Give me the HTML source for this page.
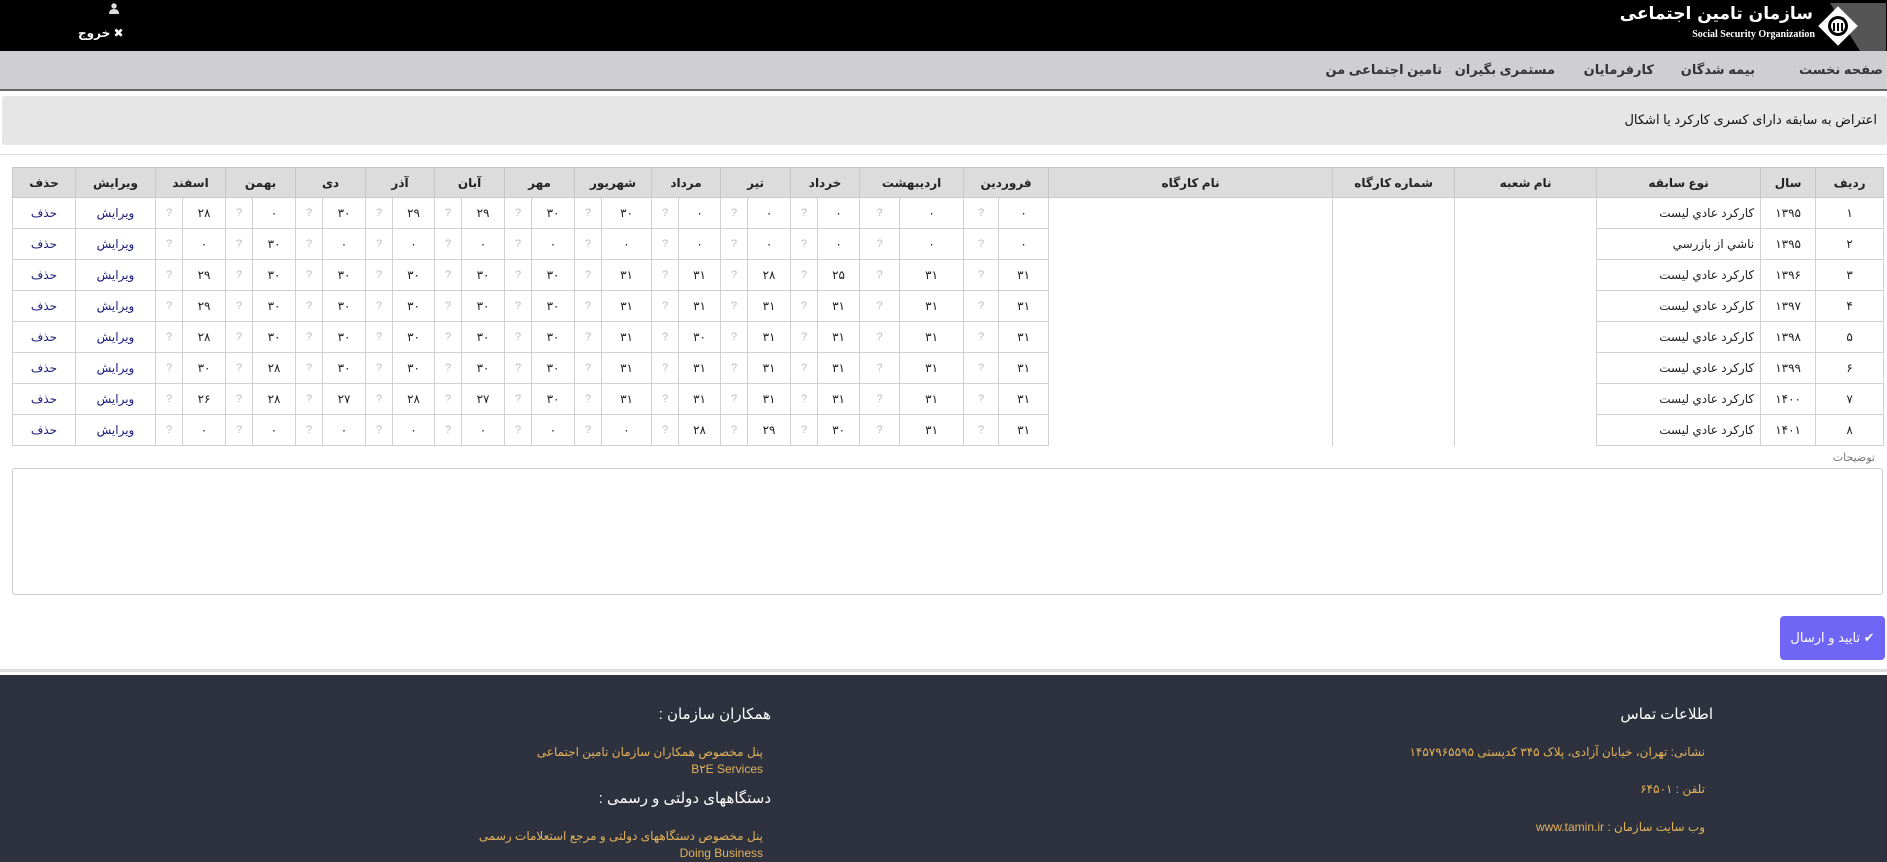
<!DOCTYPE html>
<html dir="rtl"><head><meta charset="utf-8"><style>
*{box-sizing:border-box;margin:0;padding:0}
body{width:1887px;height:862px;overflow:hidden;background:#fff;font-family:"Liberation Sans","DejaVu Sans",sans-serif;position:relative;color:#222}
.hdr{position:absolute;left:0;top:0;width:1887px;height:51px;background:#000}
.nav{position:absolute;left:0;top:51px;width:1887px;height:40px;background:#cfcfd1;border-bottom:2px solid #666}
.nav span{position:absolute;top:11px;font-size:13px;font-weight:bold;color:#333;white-space:nowrap}
.title{position:absolute;left:2px;top:96px;width:1885px;height:49px;background:#e6e6e6;border-radius:3px}
.title span{position:absolute;right:10px;top:16px;font-size:13px;color:#111}
.panel{position:absolute;left:0;top:154px;width:1887px;height:518px;border-top:1px solid #ddd;border-bottom:3px solid #ddd}
table{position:absolute;left:12px;top:167px;width:1871px;border-collapse:collapse;table-layout:fixed;font-size:12px}
th{background:#dcdcdc;height:30px;border:1px solid #c8c8c8;font-weight:bold;font-size:12px;text-align:center}
td{height:31px;border:1px solid #d0d0d0;text-align:center;color:#222}
td.q{color:#bbb;font-size:11px}
td.r{text-align:right;padding-right:6px}
td.b{border-top-color:transparent;border-bottom-color:transparent}
td.l{color:#1a1a7a}
.lbl{position:absolute;right:12px;top:451px;font-size:11px;color:#777}
.ta{position:absolute;left:12px;top:468px;width:1871px;height:127px;border:1px solid #ccc;border-radius:3px}
.btn{position:absolute;left:1780px;top:616px;width:105px;height:44px;background:#7066f5;border-radius:4px;color:#fff;font-size:13px;text-align:center;line-height:44px}
.foot{position:absolute;left:0;top:675px;width:1887px;height:187px;background:#2d323e}
.foot .h{position:absolute;color:#fff;font-size:15px;white-space:nowrap}
.foot .t{position:absolute;color:#e3b25a;font-size:12px;white-space:nowrap;text-align:right}
</style></head><body>
<div class="hdr">
  <svg style="position:absolute;left:1830px;top:3px" width="56" height="48"><polygon points="0,0 56,0 56,48 30,48" fill="#555"/></svg>
  <svg style="position:absolute;left:1818px;top:6px" width="40" height="40" viewBox="0 0 40 40"><rect x="6" y="6" width="28" height="28" transform="rotate(45 20 20)" fill="#fff"/><circle cx="20" cy="20" r="10" fill="#000"/><circle cx="20" cy="20" r="7" fill="#fff"/><rect x="15" y="17" width="2" height="8" fill="#000"/><rect x="19" y="17" width="2" height="8" fill="#000"/><rect x="23" y="17" width="2" height="8" fill="#000"/></svg>
  <div style="position:absolute;right:74px;top:4px;color:#fff;font-size:17px;font-weight:bold;font-family:'DejaVu Sans',sans-serif;white-space:nowrap">سازمان تامين اجتماعى</div>
  <div style="position:absolute;right:72px;top:29px;color:#fff;font-size:10px;font-weight:bold;font-family:'Liberation Serif',serif;white-space:nowrap">Social Security Organization</div>
  <svg style="position:absolute;left:109px;top:3px" width="10" height="11" viewBox="0 0 10 11"><circle cx="5" cy="3" r="2.7" fill="#ddd"/><path d="M0 11 Q0 6 5 6 Q10 6 10 11Z" fill="#ddd"/></svg>
  <div style="position:absolute;left:78px;top:26px;color:#fff;font-size:12px;font-weight:bold">✖ خروج</div>
</div>
<div class="nav">
  <span style="right:4px">صفحه نخست</span>
  <span style="right:132px">بيمه شدگان</span>
  <span style="right:233px">کارفرمايان</span>
  <span style="right:332px">مستمری بگيران</span>
  <span style="right:445px">تامين اجتماعی من</span>
</div>
<div class="title"><span>اعتراض به سابقه دارای کسری کارکرد يا اشکال</span></div>
<div class="panel"></div>
<table>
<colgroup><col style="width:68px"><col style="width:55px"><col style="width:164px"><col style="width:142px"><col style="width:122px"><col style="width:284px">
<col style="width:50px"><col style="width:35px"><col style="width:64px"><col style="width:40px"><col style="width:42px"><col style="width:27px"><col style="width:43px"><col style="width:27px"><col style="width:42px"><col style="width:27px"><col style="width:50px"><col style="width:27px"><col style="width:43px"><col style="width:27px"><col style="width:43px"><col style="width:27px"><col style="width:42px"><col style="width:27px"><col style="width:43px"><col style="width:27px"><col style="width:43px"><col style="width:27px"><col style="width:43px"><col style="width:27px"><col style="width:80px"><col style="width:63px"></colgroup>
<tr><th>رديف</th><th>سال</th><th>نوع سابقه</th><th>نام شعبه</th><th>شماره کارگاه</th><th>نام کارگاه</th><th colspan="2">فروردين</th><th colspan="2">ارديبهشت</th><th colspan="2">خرداد</th><th colspan="2">تير</th><th colspan="2">مرداد</th><th colspan="2">شهريور</th><th colspan="2">مهر</th><th colspan="2">آبان</th><th colspan="2">آذر</th><th colspan="2">دی</th><th colspan="2">بهمن</th><th colspan="2">اسفند</th><th>ويرايش</th><th>حذف</th></tr>
<tr><td>۱</td><td>۱۳۹۵</td><td class="r">کارکرد عادي ليست</td><td class="b"></td><td class="b"></td><td class="b"></td><td>۰</td><td class="q">?</td><td>۰</td><td class="q">?</td><td>۰</td><td class="q">?</td><td>۰</td><td class="q">?</td><td>۰</td><td class="q">?</td><td>۳۰</td><td class="q">?</td><td>۳۰</td><td class="q">?</td><td>۲۹</td><td class="q">?</td><td>۲۹</td><td class="q">?</td><td>۳۰</td><td class="q">?</td><td>۰</td><td class="q">?</td><td>۲۸</td><td class="q">?</td><td class="l">ويرايش</td><td class="l">حذف</td></tr>
<tr><td>۲</td><td>۱۳۹۵</td><td class="r">ناشي از بازرسي</td><td class="b"></td><td class="b"></td><td class="b"></td><td>۰</td><td class="q">?</td><td>۰</td><td class="q">?</td><td>۰</td><td class="q">?</td><td>۰</td><td class="q">?</td><td>۰</td><td class="q">?</td><td>۰</td><td class="q">?</td><td>۰</td><td class="q">?</td><td>۰</td><td class="q">?</td><td>۰</td><td class="q">?</td><td>۰</td><td class="q">?</td><td>۳۰</td><td class="q">?</td><td>۰</td><td class="q">?</td><td class="l">ويرايش</td><td class="l">حذف</td></tr>
<tr><td>۳</td><td>۱۳۹۶</td><td class="r">کارکرد عادي ليست</td><td class="b"></td><td class="b"></td><td class="b"></td><td>۳۱</td><td class="q">?</td><td>۳۱</td><td class="q">?</td><td>۲۵</td><td class="q">?</td><td>۲۸</td><td class="q">?</td><td>۳۱</td><td class="q">?</td><td>۳۱</td><td class="q">?</td><td>۳۰</td><td class="q">?</td><td>۳۰</td><td class="q">?</td><td>۳۰</td><td class="q">?</td><td>۳۰</td><td class="q">?</td><td>۳۰</td><td class="q">?</td><td>۲۹</td><td class="q">?</td><td class="l">ويرايش</td><td class="l">حذف</td></tr>
<tr><td>۴</td><td>۱۳۹۷</td><td class="r">کارکرد عادي ليست</td><td class="b"></td><td class="b"></td><td class="b"></td><td>۳۱</td><td class="q">?</td><td>۳۱</td><td class="q">?</td><td>۳۱</td><td class="q">?</td><td>۳۱</td><td class="q">?</td><td>۳۱</td><td class="q">?</td><td>۳۱</td><td class="q">?</td><td>۳۰</td><td class="q">?</td><td>۳۰</td><td class="q">?</td><td>۳۰</td><td class="q">?</td><td>۳۰</td><td class="q">?</td><td>۳۰</td><td class="q">?</td><td>۲۹</td><td class="q">?</td><td class="l">ويرايش</td><td class="l">حذف</td></tr>
<tr><td>۵</td><td>۱۳۹۸</td><td class="r">کارکرد عادي ليست</td><td class="b"></td><td class="b"></td><td class="b"></td><td>۳۱</td><td class="q">?</td><td>۳۱</td><td class="q">?</td><td>۳۱</td><td class="q">?</td><td>۳۱</td><td class="q">?</td><td>۳۰</td><td class="q">?</td><td>۳۱</td><td class="q">?</td><td>۳۰</td><td class="q">?</td><td>۳۰</td><td class="q">?</td><td>۳۰</td><td class="q">?</td><td>۳۰</td><td class="q">?</td><td>۳۰</td><td class="q">?</td><td>۲۸</td><td class="q">?</td><td class="l">ويرايش</td><td class="l">حذف</td></tr>
<tr><td>۶</td><td>۱۳۹۹</td><td class="r">کارکرد عادي ليست</td><td class="b"></td><td class="b"></td><td class="b"></td><td>۳۱</td><td class="q">?</td><td>۳۱</td><td class="q">?</td><td>۳۱</td><td class="q">?</td><td>۳۱</td><td class="q">?</td><td>۳۱</td><td class="q">?</td><td>۳۱</td><td class="q">?</td><td>۳۰</td><td class="q">?</td><td>۳۰</td><td class="q">?</td><td>۳۰</td><td class="q">?</td><td>۳۰</td><td class="q">?</td><td>۲۸</td><td class="q">?</td><td>۳۰</td><td class="q">?</td><td class="l">ويرايش</td><td class="l">حذف</td></tr>
<tr><td>۷</td><td>۱۴۰۰</td><td class="r">کارکرد عادي ليست</td><td class="b"></td><td class="b"></td><td class="b"></td><td>۳۱</td><td class="q">?</td><td>۳۱</td><td class="q">?</td><td>۳۱</td><td class="q">?</td><td>۳۱</td><td class="q">?</td><td>۳۱</td><td class="q">?</td><td>۳۱</td><td class="q">?</td><td>۳۰</td><td class="q">?</td><td>۲۷</td><td class="q">?</td><td>۲۸</td><td class="q">?</td><td>۲۷</td><td class="q">?</td><td>۲۸</td><td class="q">?</td><td>۲۶</td><td class="q">?</td><td class="l">ويرايش</td><td class="l">حذف</td></tr>
<tr><td>۸</td><td>۱۴۰۱</td><td class="r">کارکرد عادي ليست</td><td class="b"></td><td class="b"></td><td class="b"></td><td>۳۱</td><td class="q">?</td><td>۳۱</td><td class="q">?</td><td>۳۰</td><td class="q">?</td><td>۲۹</td><td class="q">?</td><td>۲۸</td><td class="q">?</td><td>۰</td><td class="q">?</td><td>۰</td><td class="q">?</td><td>۰</td><td class="q">?</td><td>۰</td><td class="q">?</td><td>۰</td><td class="q">?</td><td>۰</td><td class="q">?</td><td>۰</td><td class="q">?</td><td class="l">ويرايش</td><td class="l">حذف</td></tr>
</table>
<div class="lbl">توضيحات</div>
<div class="ta"></div>
<div class="btn">✔ تاييد و ارسال</div>
<div class="foot">
  <div class="h" style="right:174px;top:30px">اطلاعات تماس</div>
  <div class="t" style="right:182px;top:70px">نشانی: تهران، خيابان آزادی، پلاک ۳۴۵ کدپستی ۱۴۵۷۹۶۵۵۹۵</div>
  <div class="t" style="right:182px;top:107px">تلفن : ۶۴۵۰۱</div>
  <div class="t" style="right:182px;top:145px">وب سايت سازمان : www.tamin.ir</div>
  <div class="h" style="right:1116px;top:30px">همکاران سازمان :</div>
  <div class="t" style="right:1124px;top:69px;line-height:17px">پنل مخصوص همکاران سازمان تامين اجتماعی<br>B۲E Services</div>
  <div class="h" style="right:1116px;top:114px">دستگاههای دولتی و رسمی :</div>
  <div class="t" style="right:1124px;top:153px;line-height:17px">پنل مخصوص دستگاههای دولتی و مرجع استعلامات رسمی<br>Doing Business</div>
</div>
</body></html>
